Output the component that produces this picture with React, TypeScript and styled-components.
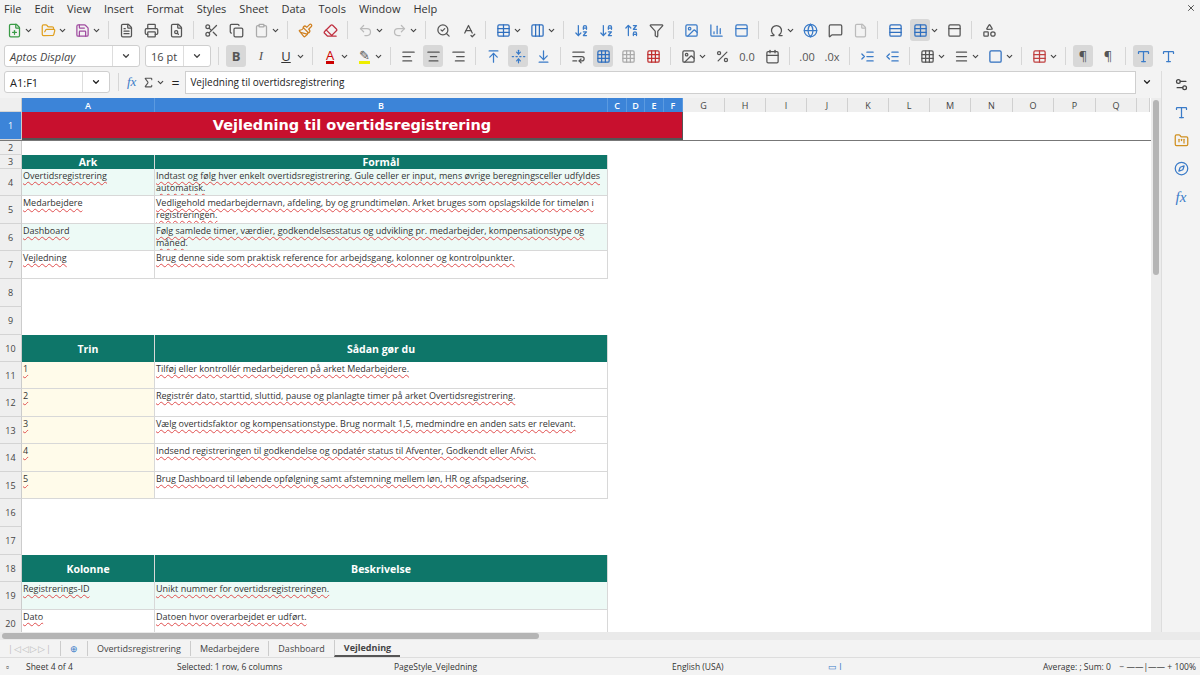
import React from "react";
import styled, { createGlobalStyle } from "styled-components";
import {
  FilePlus, FolderOpen, Save, FileText, Printer, FileSearch, Scissors, Copy, Clipboard, Paintbrush, Eraser,
  Undo2, Redo2, SearchCheck, SpellCheck, Table, Columns3, ArrowDownAZ, ArrowUpZA, Filter, Image, BarChart3,
  Omega, Globe, MessageSquare, File, Rows3, PanelTop, Shapes, ChevronDown, AlignLeft, AlignCenter, AlignRight,
  ArrowUpToLine, FoldVertical, ArrowDownToLine, WrapText, Grid3x3, Percent, Calendar, IndentIncrease, IndentDecrease,
  Square, Menu, Settings2, Type, FolderKanban, Compass, X, Sigma
} from "lucide-react";

const G = createGlobalStyle`
  body{margin:0;font-family:"Open Sans","Noto Sans",sans-serif;font-size:12px;color:#222;background:#f5f5f5;overflow:hidden}
`;
const Page = styled.div`width:1200px;height:675px;display:flex;flex-direction:column;background:#f3f3f3;`;
const MenuBar = styled.div`height:17px;display:flex;align-items:center;padding:0 4px;gap:13px;font-size:11px;color:#333;
  span:last-child{margin-left:auto}`;
const Tool = styled.div`height:26px;display:flex;align-items:center;padding:0 4px;gap:5px;color:#444;`;
const Btn = styled.div<{ on?: boolean; c?: string }>`width:20px;height:22px;display:flex;align-items:center;justify-content:center;
  border-radius:3px;background:${p => p.on ? "#d8d8d8" : "transparent"};color:${p => p.c || "#555"};font-size:13px;`;
const Sep = styled.div`width:1px;height:18px;background:#d6d6d6;margin:0 2px;`;
const Caret = () => <ChevronDown size={9} strokeWidth={3} color="#444" style={{ marginLeft: -5 }} />;
const Combo = styled.div<{ w: number }>`width:${p => p.w}px;height:22px;background:#fff;border:1px solid #cfcfcf;border-radius:3px;
  display:flex;align-items:center;font-size:11px;padding-left:5px;box-sizing:border-box;font-style:${p => p.w > 100 ? "italic" : "normal"};
  span{flex:1}
  i{width:26px;height:100%;border-left:1px solid #ddd;display:flex;align-items:center;justify-content:center;}`;
const FBar = styled.div`height:26px;display:flex;align-items:center;padding:0 4px;gap:6px;`;
const FInput = styled.div`flex:1;height:21px;background:#fff;border:1px solid #cfcfcf;font-size:10px;display:flex;align-items:center;padding-left:4px;`;
const Body = styled.div`flex:1;display:flex;min-height:0;margin-top:3px;`;
const Sheet = styled.div`flex:1;display:flex;flex-direction:column;background:#fff;position:relative;overflow:hidden;`;
const Side = styled.div`width:38px;background:#f3f3f3;border-left:1px solid #ddd;display:flex;flex-direction:column;align-items:center;gap:13px;padding-top:6px;color:#3a7bc8;margin-top:-27px;`;

const cols = [133, 453, 19, 18, 19, 19, 42, 41, 41, 41, 41, 41, 41, 42, 41, 42, 41, 13];
const tmpl = `22px ${cols.map(c => c + "px").join(" ")}`;
const names = "A B C D E F G H I J K L M N O P Q".split(" ");
const Row = styled.div<{ h: number }>`display:grid;grid-template-columns:${tmpl};height:${p => p.h}px;flex:none;`;
const RH = styled.div<{ sel?: boolean }>`background:${p => p.sel ? "#3c84d8" : "#efefef"};color:${p => p.sel ? "#fff" : "#444"};
  font-size:9px;display:flex;align-items:center;justify-content:center;border-bottom:1px solid #d4d4d4;border-right:1px solid #ccc;`;
const CH = styled.div<{ sel?: boolean }>`background:${p => p.sel ? "#3c84d8" : "#efefef"};color:${p => p.sel ? "#fff" : "#444"};font-size:9px;
  display:flex;align-items:center;justify-content:center;border-right:1px solid ${p => p.sel ? "#5b9ae0" : "#d0d0d0"};font-weight:${p => p.sel ? 600 : 400};`;
const Cell = styled.div<{ span?: number; bg?: string; head?: boolean; bb?: boolean }>`grid-column:span ${p => p.span || 1};
  background:${p => p.bg || "transparent"};color:${p => p.head ? "#fff" : "#333"};font-weight:${p => p.head ? 700 : 400};
  font-size:${p => p.head ? 10.5 : 9}px;line-height:12px;display:flex;align-items:${p => p.head ? "center" : "flex-start"};
  justify-content:${p => p.head ? "center" : "flex-start"};padding:${p => p.head ? "0" : "1px 1px"};overflow:hidden;box-sizing:border-box;
  border-right:${p => p.bg ? "1px solid #d8d8d8" : "none"};border-bottom:${p => p.bb ? "1px solid #d8d8d8" : "none"};
  text-decoration:${p => p.head ? "none" : "underline wavy #e05050 1px"};text-underline-offset:2px;`;
const Title = styled.div`grid-column:span 6;background:#c8102e;color:#fff;font-weight:700;font-size:14.5px;font-family:"DejaVu Sans",sans-serif;
  display:flex;align-items:center;justify-content:center;border:1px solid #555;border-width:0 1px 2px 0;`;
const HScroll = styled.div`height:8px;background:#eaeaea;display:flex;align-items:center;padding-left:2px;
  div{width:537px;height:6px;background:#b5b5b5;border-radius:3px}`;
const Tabs = styled.div`height:17px;display:flex;align-items:center;font-size:9px;color:#444;gap:0;background:#f3f3f3;`;
const Tab = styled.div<{ on?: boolean }>`padding:0 9px;height:15px;display:flex;align-items:center;border-left:1px solid #ccc;
  font-weight:${p => p.on ? 700 : 400};border-bottom:${p => p.on ? "2px solid #555" : "none"};`;
const Status = styled.div`height:17px;display:grid;grid-template-columns:26px 151px 217px 278px 156px 115px 1fr;align-items:center;font-size:8.5px;color:#333;border-top:1px solid #ddd;`;
const VScroll = styled.div`position:absolute;right:0;top:0;bottom:0;width:10px;background:#ececec;
  div{margin:2px 2px;height:175px;background:#b5b5b5;border-radius:3px}`;

type R = { n: number; h: number; a?: string; b?: string; bg?: string; abg?: string; head?: boolean };
const rows: R[] = [
  { n: 2, h: 14 },
  { n: 3, h: 14, a: "Ark", b: "Formål", head: true },
  { n: 4, h: 27, a: "Overtidsregistrering", b: "Indtast og følg hver enkelt overtidsregistrering. Gule celler er input, mens øvrige beregningsceller udfyldes automatisk.", bg: "#edfaf6" },
  { n: 5, h: 28, a: "Medarbejdere", b: "Vedligehold medarbejdernavn, afdeling, by og grundtimeløn. Arket bruges som opslagskilde for timeløn i registreringen.", bg: "#fff" },
  { n: 6, h: 27, a: "Dashboard", b: "Følg samlede timer, værdier, godkendelsesstatus og udvikling pr. medarbejder, kompensationstype og måned.", bg: "#edfaf6" },
  { n: 7, h: 28, a: "Vejledning", b: "Brug denne side som praktisk reference for arbejdsgang, kolonner og kontrolpunkter.", bg: "#fff" },
  { n: 8, h: 28 }, { n: 9, h: 28 },
  { n: 10, h: 27, a: "Trin", b: "Sådan gør du", head: true },
  { n: 11, h: 27, a: "1", b: "Tilføj eller kontrollér medarbejderen på arket Medarbejdere.", bg: "#fff", abg: "#fffbea" },
  { n: 12, h: 28, a: "2", b: "Registrér dato, starttid, sluttid, pause og planlagte timer på arket Overtidsregistrering.", bg: "#fff", abg: "#fffbea" },
  { n: 13, h: 27, a: "3", b: "Vælg overtidsfaktor og kompensationstype. Brug normalt 1,5, medmindre en anden sats er relevant.", bg: "#fff", abg: "#fffbea" },
  { n: 14, h: 28, a: "4", b: "Indsend registreringen til godkendelse og opdatér status til Afventer, Godkendt eller Afvist.", bg: "#fff", abg: "#fffbea" },
  { n: 15, h: 27, a: "5", b: "Brug Dashboard til løbende opfølgning samt afstemning mellem løn, HR og afspadsering.", bg: "#fff", abg: "#fffbea" },
  { n: 16, h: 28 }, { n: 17, h: 28 },
  { n: 18, h: 27, a: "Kolonne", b: "Beskrivelse", head: true },
  { n: 19, h: 28, a: "Registrerings-ID", b: "Unikt nummer for overtidsregistreringen.", bg: "#edfaf6" },
  { n: 20, h: 27, a: "Dato", b: "Datoen hvor overarbejdet er udført.", bg: "#fff" },
];

export default function App() {
  const s = 15;
  return (
    <Page>
      <G />
      <MenuBar>{["File", "Edit", "View", "Insert", "Format", "Styles", "Sheet", "Data", "Tools", "Window", "Help"].map(m => <span key={m}>{m}</span>)}<span><X size={10} /></span></MenuBar>
      <Tool>
        <Btn c="#3a9b46"><FilePlus size={s} /></Btn><Caret /><Btn c="#e0a020"><FolderOpen size={s} /></Btn><Caret /><Btn c="#a04ca0"><Save size={s} /></Btn><Caret /><Sep />
        <Btn><FileText size={s} /></Btn><Btn><Printer size={s} /></Btn><Btn><FileSearch size={s} /></Btn><Sep />
        <Btn><Scissors size={s} /></Btn><Btn><Copy size={s} /></Btn><Btn c="#aaa"><Clipboard size={s} /></Btn><Caret /><Sep />
        <Btn c="#d08020"><Paintbrush size={s} /></Btn><Btn c="#c03040"><Eraser size={s} /></Btn><Sep />
        <Btn c="#bbb"><Undo2 size={s} /></Btn><Caret /><Btn c="#bbb"><Redo2 size={s} /></Btn><Caret /><Sep />
        <Btn><SearchCheck size={s} /></Btn><Btn><SpellCheck size={s} /></Btn><Sep />
        <Btn c="#2f6fbf"><Table size={s} /></Btn><Caret /><Btn c="#2f6fbf"><Columns3 size={s} /></Btn><Caret /><Sep />
        <Btn c="#3a7bc8"><ArrowDownAZ size={s} /></Btn><Btn c="#3a7bc8"><ArrowDownAZ size={s} /></Btn><Btn c="#3a7bc8"><ArrowUpZA size={s} /></Btn><Btn><Filter size={s} /></Btn><Sep />
        <Btn c="#3a7bc8"><Image size={s} /></Btn><Btn c="#3a7bc8"><BarChart3 size={s} /></Btn><Btn c="#3a7bc8"><PanelTop size={s} /></Btn><Sep />
        <Btn><Omega size={s} /></Btn><Caret /><Btn c="#3a7bc8"><Globe size={s} /></Btn><Btn><MessageSquare size={s} /></Btn><Btn c="#bbb"><File size={s} /></Btn><Sep />
        <Btn c="#2f6fbf"><Rows3 size={s} /></Btn><Btn on c="#2f6fbf"><Table size={s} /></Btn><Caret /><Btn><PanelTop size={s} /></Btn><Sep />
        <Btn><Shapes size={s} /></Btn>
      </Tool>
      <Tool>
        <Combo w={136}><span>Aptos Display</span><i><ChevronDown size={10} strokeWidth={3} /></i></Combo>
        <Combo w={66}><span>16 pt</span><i><ChevronDown size={10} strokeWidth={3} /></i></Combo>
        <Sep />
        <Btn on><b>B</b></Btn><Btn><i style={{ fontFamily: "Liberation Serif" }}>I</i></Btn><Btn c="#333"><u>U</u></Btn><Caret /><Sep />
        <Btn c="#c00"><span style={{ borderBottom: "3px solid #c00", lineHeight: "12px" }}>A</span></Btn><Caret />
        <Btn c="#555"><span style={{ borderBottom: "3px solid #ee0", lineHeight: "12px" }}>✎</span></Btn><Caret /><Sep />
        <Btn><AlignLeft size={s} /></Btn><Btn on><AlignCenter size={s} /></Btn><Btn><AlignRight size={s} /></Btn><Sep />
        <Btn c="#3a7bc8"><ArrowUpToLine size={s} /></Btn><Btn on c="#3a7bc8"><FoldVertical size={s} /></Btn><Btn c="#3a7bc8"><ArrowDownToLine size={s} /></Btn><Sep />
        <Btn><WrapText size={s} /></Btn><Btn on c="#2f6fbf"><Grid3x3 size={s} /></Btn><Btn c="#aaa"><Grid3x3 size={s} /></Btn><Btn c="#c03030"><Grid3x3 size={s} /></Btn><Sep />
        <Btn><Image size={s} /></Btn><Caret /><Btn><Percent size={s} /></Btn><Btn style={{ fontSize: 11 }}>0.0</Btn><Btn><Calendar size={s} /></Btn><Sep />
        <Btn style={{ fontSize: 11 }}>.00</Btn><Btn style={{ fontSize: 11 }}>.0x</Btn><Sep />
        <Btn c="#3a7bc8"><IndentIncrease size={s} /></Btn><Btn c="#3a7bc8"><IndentDecrease size={s} /></Btn><Sep />
        <Btn><Grid3x3 size={s} /></Btn><Caret /><Btn><Menu size={s} /></Btn><Caret /><Btn c="#2f6fbf"><Square size={s} /></Btn><Caret /><Sep />
        <Btn c="#c04040"><Table size={s} /></Btn><Caret /><Sep />
        <Btn on>¶</Btn><Btn>¶</Btn><Sep /><Btn on c="#3a7bc8"><Type size={s} /></Btn><Btn c="#3a7bc8"><Type size={s} /></Btn>
      </Tool>
      <FBar>
        <Combo w={106} style={{ fontStyle: "normal" }}><span>A1:F1</span><i><ChevronDown size={10} strokeWidth={3} /></i></Combo>
        <Sep />
        <span style={{ color: "#3a7bc8", fontStyle: "italic", fontFamily: "Liberation Serif", fontSize: 13 }}>fx</span>
        <Sigma size={13} color="#555" /><Caret /><span style={{ fontSize: 14 }}>=</span>
        <FInput>Vejledning til overtidsregistrering</FInput>
        <ChevronDown size={10} strokeWidth={3} />
        <div style={{ width: 38, display: "flex", justifyContent: "center" }}><Menu size={14} /></div>
      </FBar>
      <Body>
        <Sheet>
          <Row h={14}><RH />{names.map((n, i) => <CH key={n} sel={i < 6}>{n}</CH>)}<CH /></Row>
          <Row h={28} style={{ borderBottom: "1px solid #777" }}><RH sel>1</RH><Title>Vejledning til overtidsregistrering</Title></Row>
          {rows.map(r => (
            <Row key={r.n} h={r.h}>
              <RH>{r.n}</RH>
              {r.a !== undefined && <>
                <Cell head={r.head} bg={r.head ? "#0e7669" : (r.abg || r.bg)} bb={!r.head}>{r.a}</Cell>
                <Cell head={r.head} bg={r.head ? "#0e7669" : r.bg} bb={!r.head}>{r.b}</Cell>
              </>}
            </Row>
          ))}
          <VScroll><div /></VScroll>
        </Sheet>
        <Side>
          <Settings2 size={15} color="#444" /><Type size={15} /><FolderKanban size={15} color="#d09020" /><Compass size={15} />
          <span style={{ fontStyle: "italic", fontFamily: "Liberation Serif", fontSize: 15 }}>fx</span>
        </Side>
      </Body>
      <HScroll><div /></HScroll>
      <Tabs>
        <span style={{ color: "#bbb", padding: "0 8px", letterSpacing: 1 }}>|◁◁▷▷|</span>
        <Tab><span style={{ color: "#3a7bc8" }}>⊕</span></Tab>
        <Tab>Overtidsregistrering</Tab><Tab>Medarbejdere</Tab><Tab>Dashboard</Tab><Tab on>Vejledning</Tab>
      </Tabs>
      <Status>
        <span style={{ paddingLeft: 6 }}>▫</span><span>Sheet 4 of 4</span><span>Selected: 1 row, 6 columns</span><span>PageStyle_Vejledning</span>
        <span>English (USA)</span><span style={{ color: "#3a7bc8" }}>▭ I</span>
        <span style={{ display: "flex", justifyContent: "space-between", paddingRight: 4 }}><span style={{ marginLeft: 100 }}>Average: ; Sum: 0</span><span>−  ——|——  +  100%</span></span>
      </Status>
    </Page>
  );
}
